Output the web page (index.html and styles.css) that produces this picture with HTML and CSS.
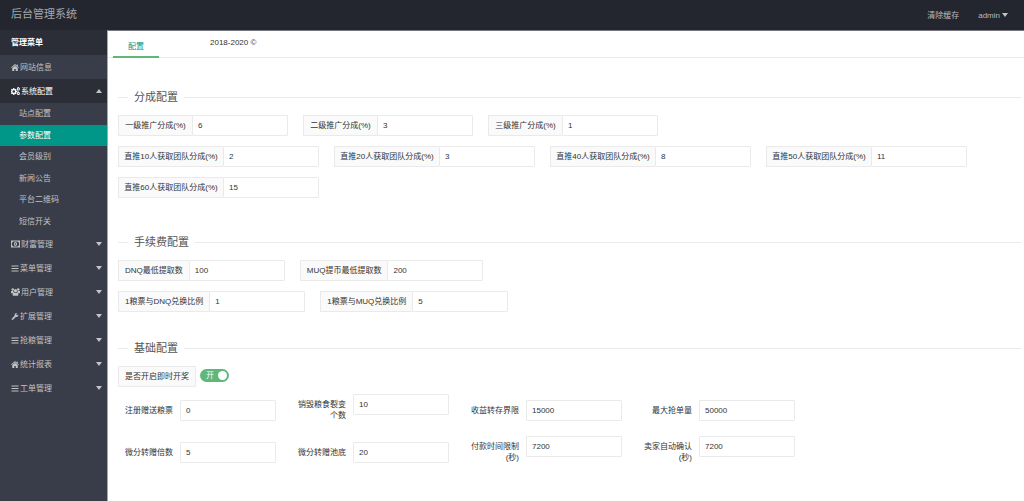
FILE: index.html
```html
<!DOCTYPE html>
<html lang="zh-CN">
<head>
<meta charset="utf-8">
<title>后台管理系统</title>
<link rel="stylesheet" href="styles.css">
</head>
<body>
<svg class="sprite" aria-hidden="true">
  <symbol id="home" viewBox="0 0 16 14"><path d="M8 0 0 7l1 1.200L8 2.600l7 5.600L16 7l-2.500-2.200V1h-2v2.100zM8 3.400 2.500 8V14h4v-4h3v4h4V8z"/></symbol>
  <symbol id="cogs" viewBox="0 0 18 16"><path fill-rule="evenodd" d="M4.500 2h2.200l.4 1.800 1.200.5 1.500-1 1.400 1.400-1 1.500.5 1.200 1.800.4v2.200l-1.800.4-.5 1.200 1 1.500-1.400 1.400-1.500-1-1.200.5L6.700 16H4.500l-.4-2-1.200-.5-1.500 1L0 13l1-1.500-.4-1.100L0 10V7.800l.6-.4L1 6.200 0 4.700l1.400-1.400 1.500 1 1.200-.5zM5.600 6.300a2.600 2.600 0 1 0 0 5.200 2.600 2.600 0 0 0 0-5.200z"/><path fill-rule="evenodd" d="M13.500 0h2l.3 1.200 1.300.7.9 1.600-.7 1 .2 1.300-1.600 1.400-1.500-.1-1.600-.3-.9-1.400.3-1.300-.4-1.200 1-1.400zM14.600 2.600a1.200 1.200 0 1 0 0 2.400 1.200 1.200 0 0 0 0-2.400zM13.500 9h2l.3 1.200 1.300.7.9 1.600-.7 1 .2 1.300-1.600 1.200h-1.500l-1.600-.4-.9-1.400.3-1.300-.4-1.200 1-1.400zM14.600 11.500a1.200 1.200 0 1 0 0 2.400 1.200 1.200 0 0 0 0-2.400z"/></symbol>
  <symbol id="money" viewBox="0 0 18 14"><path fill-rule="evenodd" d="M0 0h18v14H0zM4 2A2.500 2.500 0 0 1 1.800 4.500v5A2.500 2.500 0 0 1 4 12h10a2.500 2.500 0 0 1 2.200-2.500v-5A2.500 2.500 0 0 1 14 2zM9 3.200c2 0 3 1.700 3 3.800s-1 3.800-3 3.800S6 9.100 6 7s1-3.800 3-3.800zM8.300 5v4h1.400V5z"/></symbol>
  <symbol id="bars" viewBox="0 0 14 14"><path d="M0 1h14v2.200H0zM0 6h14v2.200H0zM0 11h14v2.200H0z"/></symbol>
  <symbol id="users" viewBox="0 0 18 15"><circle cx="3.500" cy="2.500" r="2.500"/><circle cx="14.500" cy="2.500" r="2.500"/><circle cx="9" cy="5" r="3.300"/><path d="M0 5.500h4.600c0 2 .7 2.800 1.400 3.300L4 10H1.200C.3 10 0 9 0 8zM18 5.500h-4.600c0 2-.7 2.800-1.400 3.300l2 1.200h2.800c.9 0 1.200-1 1.200-2zM6 8.500c2 1.500 4 1.500 6 0 2 .3 2.800 2 2.800 4 0 1.500-.8 2.500-2 2.500H5.200c-1.200 0-2-1-2-2.500 0-2 .8-3.700 2.800-4z"/></symbol>
  <symbol id="wrench" viewBox="0 0 16 16"><path fill-rule="evenodd" d="M15.500 3.200 12.800 5l-1.900-1V1.900L13.500.3C11 -.5 7.600.8 7 4.200c-.1.700 0 1.300.1 1.900L.7 12.400c-.8.800-.8 1.600 0 2.400l.5.500c.8.800 1.600.8 2.400 0L9.900 9c3.600 1 6.600-1.900 5.600-5.800zM2.600 12.600a.8.800 0 1 1 0 1.600.8.800 0 0 1 0-1.600z"/></symbol>
</svg>

<header class="topbar">
  <h1 class="logo">后台管理系统</h1>
  <nav class="topnav">
    <a href="#">清除缓存</a>
    <a href="#">admin<span class="caret"></span></a>
  </nav>
</header>

<div class="layout">
  <nav class="sidebar">
    <h2 class="menu-title">管理菜单</h2>
    <a class="menu-item" href="#"><svg class="icon"><use href="#home"/></svg>网站信息</a>
    <a class="menu-item open" href="#"><svg class="icon wide"><use href="#cogs"/></svg>系统配置<span class="caret up"></span></a>
    <div class="submenu">
      <a href="#">站点配置</a>
      <a class="current" href="#">参数配置</a>
      <a href="#">会员级别</a>
      <a href="#">新闻公告</a>
      <a href="#">平台二维码</a>
      <a href="#">短信开关</a>
    </div>
    <a class="menu-item" href="#"><svg class="icon wide"><use href="#money"/></svg>财富管理<span class="caret"></span></a>
    <a class="menu-item" href="#"><svg class="icon"><use href="#bars"/></svg>菜单管理<span class="caret"></span></a>
    <a class="menu-item" href="#"><svg class="icon wide"><use href="#users"/></svg>用户管理<span class="caret"></span></a>
    <a class="menu-item" href="#"><svg class="icon"><use href="#wrench"/></svg>扩展管理<span class="caret"></span></a>
    <a class="menu-item" href="#"><svg class="icon"><use href="#bars"/></svg>抢粮管理<span class="caret"></span></a>
    <a class="menu-item" href="#"><svg class="icon"><use href="#home"/></svg>统计报表<span class="caret"></span></a>
    <a class="menu-item" href="#"><svg class="icon"><use href="#bars"/></svg>工单管理<span class="caret"></span></a>
  </nav>

  <main class="content">
    <div class="tabs">
      <a class="tab" href="#">配置</a>
      <span class="copyright">2018-2020 ©</span>
    </div>
    <form class="form">
      <fieldset class="group">
        <legend>分成配置</legend>
        <div class="row short">
          <div class="field"><label for="l1">一级推广分成(%)</label><input id="l1" value="6"></div>
          <div class="field"><label for="l2">二级推广分成(%)</label><input id="l2" value="3"></div>
          <div class="field"><label for="l3">三级推广分成(%)</label><input id="l3" value="1"></div>
        </div>
        <div class="row long">
          <div class="field"><label for="t10">直推10人获取团队分成(%)</label><input id="t10" value="2"></div>
          <div class="field"><label for="t20">直推20人获取团队分成(%)</label><input id="t20" value="3"></div>
          <div class="field"><label for="t40">直推40人获取团队分成(%)</label><input id="t40" value="8"></div>
          <div class="field"><label for="t50">直推50人获取团队分成(%)</label><input id="t50" value="11"></div>
          <div class="field"><label for="t60">直推60人获取团队分成(%)</label><input id="t60" value="15"></div>
        </div>
      </fieldset>

      <fieldset class="group fees">
        <legend>手续费配置</legend>
        <div class="row">
          <div class="field"><label for="dnq">DNQ最低提取数</label><input id="dnq" value="100"></div>
          <div class="field"><label for="muq">MUQ提币最低提取数</label><input id="muq" value="200"></div>
        </div>
        <div class="row">
          <div class="field"><label for="rd">1粮票与DNQ兑换比例</label><input id="rd" value="1"></div>
          <div class="field"><label for="rm">1粮票与MUQ兑换比例</label><input id="rm" value="5"></div>
        </div>
      </fieldset>

      <fieldset class="group">
        <legend>基础配置</legend>
        <div class="switch-row">
          <div class="field"><label class="solo" for="instant">是否开启即时开奖</label></div>
          <label class="switch"><input type="checkbox" id="instant" checked><span>开</span></label>
        </div>
        <div class="basic">
          <div class="item"><label for="b1">注册赠送粮票</label><input id="b1" value="0"></div>
          <div class="item"><label for="b2">销毁粮食裂变个数</label><input id="b2" value="10"></div>
          <div class="item"><label for="b3">收益转存界限</label><input id="b3" value="15000"></div>
          <div class="item"><label for="b4">最大抢单量</label><input id="b4" value="50000"></div>
          <div class="item"><label for="b5">微分转赠倍数</label><input id="b5" value="5"></div>
          <div class="item"><label for="b6">微分转赠池底</label><input id="b6" value="20"></div>
          <div class="item"><label for="b7">付款时间限制(秒)</label><input id="b7" value="7200"></div>
          <div class="item"><label for="b8">卖家自动确认(秒)</label><input id="b8" value="7200"></div>
        </div>
      </fieldset>
    </form>
  </main>
</div>
</body>
</html>
```
FILE: styles.css
```css
* { box-sizing: border-box; }

body {
  display: flex;
  flex-direction: column;
  min-height: 100vh;
  margin: 0;
  background: #fff;
  color: #333;
  font: 8px/11px "Liberation Sans", "Noto Sans CJK SC", sans-serif;
}

a { color: inherit; text-decoration: none; }

.sprite { display: none; }

.topbar {
  display: flex;
  justify-content: space-between;
  align-items: center;
  height: 30px;
  padding: 0 16px 0 11px;
  background: #23262e;
  color: #b9babc;
}

.logo {
  margin: 0;
  padding-bottom: 2px;
  color: #a5a6a9;
  font-size: 11px;
  font-weight: 400;
  line-height: 16px;
}

.topnav { display: flex; gap: 19px; }
.topnav a { display: flex; align-items: center; gap: 2px; }

.caret {
  border: 3px solid transparent;
  border-top: 4px solid #c2c2c2;
  border-bottom: 0;
}

.caret.up {
  border-top: 0;
  border-bottom: 4px solid #c2c2c2;
}

.layout { display: flex; flex: 1; }

.sidebar {
  flex: 0 0 107px;
  background: #393d49;
  color: #c2c2c2;
}

.menu-title {
  margin: 0;
  padding: 7px 11px;
  background: #2b2e37;
  color: #fff;
  font-size: 8px;
  font-weight: 700;
  line-height: 11px;
}

.menu-item {
  display: flex;
  align-items: center;
  gap: 1px;
  height: 24px;
  padding: 0 5px 0 11px;
}

.menu-item .caret { margin-left: auto; }
.menu-item.open { background: #2b2e37; color: #fff; }

.icon { width: 8px; height: 7px; fill: currentColor; }
.icon.wide { width: 9px; height: 8px; }

.submenu {
  display: flex;
  flex-direction: column;
  height: 129px;
}

.submenu a {
  display: flex;
  flex: 1;
  align-items: center;
  padding-left: 19px;
}

.submenu .current { background: #009688; color: #fff; }

.content {
  flex: 1;
  min-width: 0;
  border-top: 1px solid #77757e;
  border-left: 1px solid #a6a7ad;
}

.tabs {
  display: flex;
  gap: 51px;
  height: 27px;
  padding-left: 5px;
  border-bottom: 1px solid #eaeaea;
}

.tab {
  height: 27px;
  padding: 10px 15px 0;
  border-bottom: 2px solid #5fb878;
  color: #009688;
}

.copyright { padding-top: 6px; }

.form { padding: 31px 3px 24px 10px; }

.group {
  min-width: 0;
  margin: 0 0 36px;
  padding: 10px 0 0;
  border: 0 solid #eaeaea;
  border-top-width: 1px;
}

.group.fees { margin-bottom: 28px; }
.group:last-child { margin-bottom: 0; }

.group legend {
  margin-left: 10px;
  padding: 0 6px;
  color: #555;
  font-size: 11px;
  line-height: 16px;
}

.row {
  display: flex;
  flex-wrap: wrap;
  gap: 10px 15px;
}

.row + .row { margin-top: 10px; }

.field { display: flex; }

.field label {
  height: 21px;
  padding: 4px 6px;
  border: 1px solid #eaeaea;
  border-right: 0;
  border-radius: 1px 0 0 1px;
  background: #fafafa;
  text-align: center;
  white-space: nowrap;
}

.field .solo { border-right: 1px solid #eaeaea; }

.short label { width: 74px; }
.long label { width: 105px; padding: 4px 5px; }

.field input,
.item input {
  width: 96px;
  height: 21px;
  margin: 0;
  padding: 0 5px;
  border: 1px solid #eaeaea;
  border-radius: 1px;
  background: #fff;
  color: #333;
  font: inherit;
}

.switch-row { display: flex; gap: 4px; }

.switch {
  display: flex;
  align-items: center;
  justify-content: space-between;
  flex-direction: row-reverse;
  width: 29px;
  height: 13px;
  margin-top: 3px;
  padding: 0 2px 0 6px;
  border-radius: 7px;
  background: #5fb878;
  color: #fff;
}

.switch input {
  appearance: none;
  width: 9px;
  height: 9px;
  margin: 0;
  border-radius: 50%;
  background: #fff;
}

.basic {
  display: grid;
  grid-template-columns: repeat(auto-fill, 152px);
  align-items: center;
  gap: 10px 21px;
  max-width: 700px;
  margin-top: 7px;
  padding-left: 6px;
}

.item { display: flex; align-items: flex-start; gap: 7px; }

.item label {
  width: 49px;
  padding: 5px 0;
  text-align: right;
}
```
